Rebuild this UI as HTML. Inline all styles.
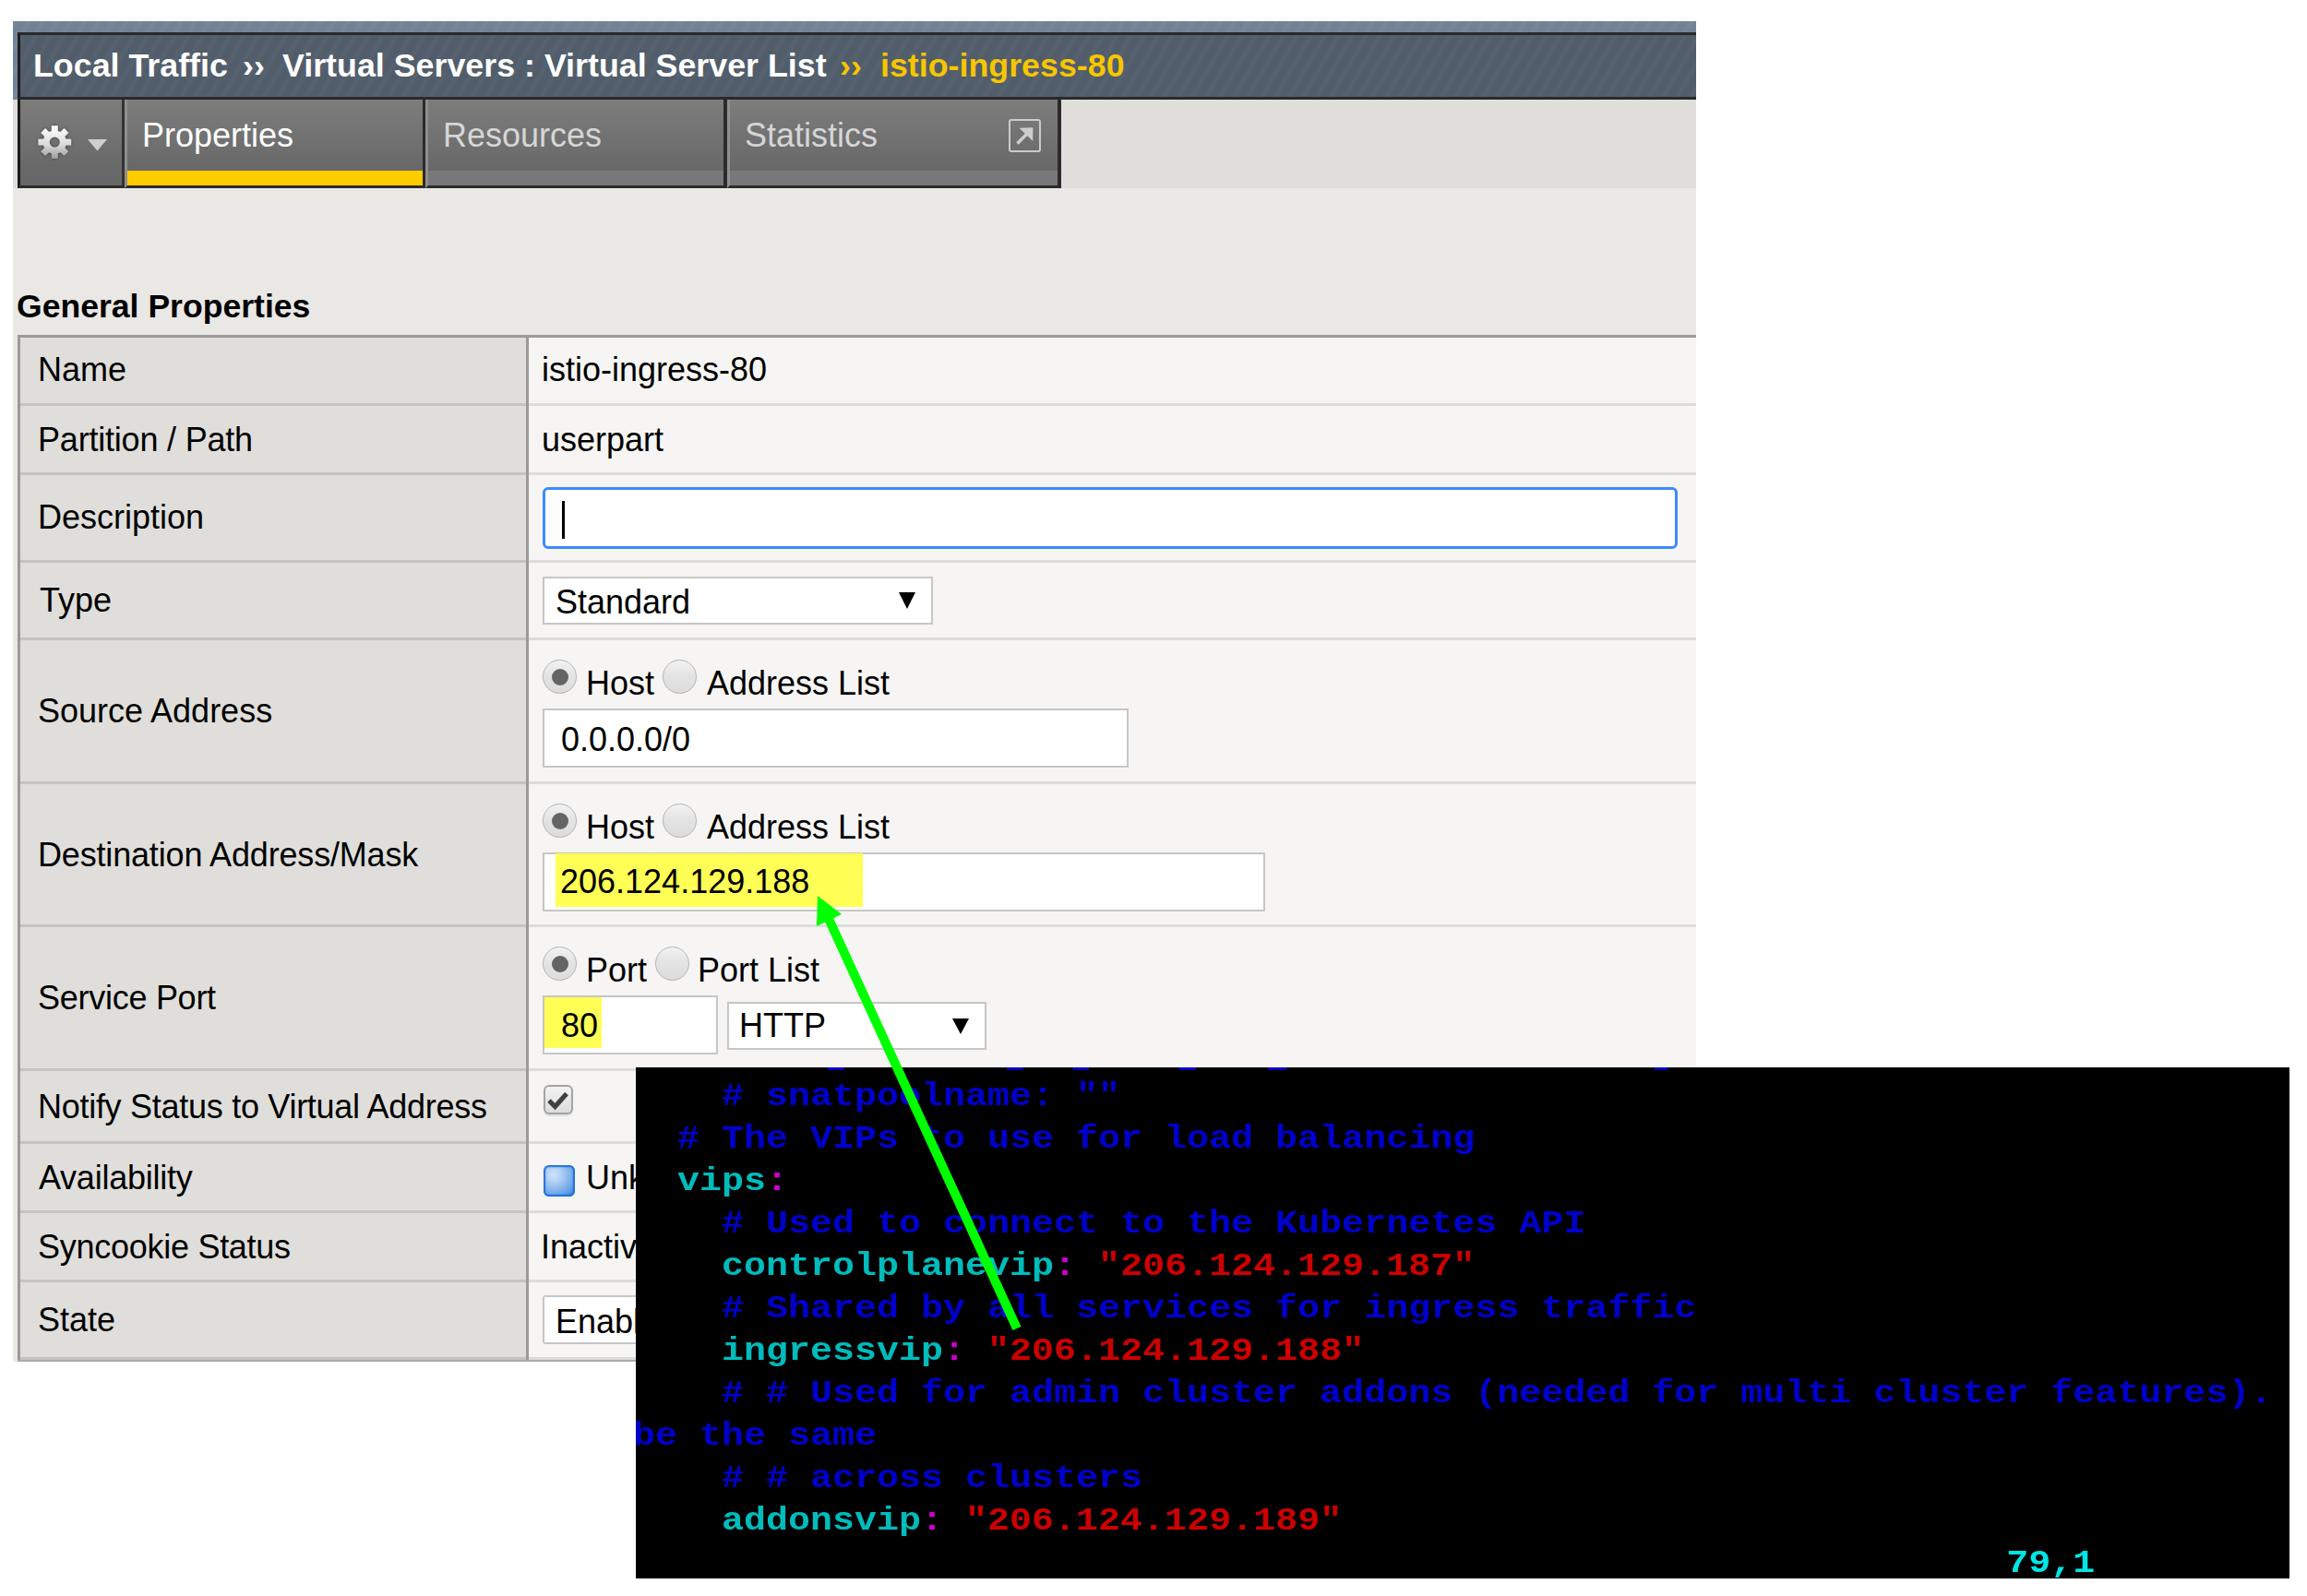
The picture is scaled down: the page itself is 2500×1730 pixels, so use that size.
<!DOCTYPE html>
<html><head><meta charset="utf-8">
<style>
html,body{margin:0;padding:0;background:#fff;width:2500px;height:1730px;overflow:hidden;position:relative}
body{font-family:"Liberation Sans",sans-serif}
.a{position:absolute}
.t{position:absolute;white-space:pre;font-size:36px;line-height:36px;color:#000}
.hdr{left:14px;top:23px;width:1824px;height:85px;background:#728395 repeating-linear-gradient(120deg,rgba(255,255,255,0.03) 0 5px,rgba(0,0,0,0) 5px 13px)}
.hdrin{left:19px;top:35px;width:1816px;height:67px;border-top:3px solid #2a2a2a;border-bottom:3px solid #2a2a2a;border-left:3px solid #1e1e1e;box-sizing:content-box;
 background:#515d6a repeating-linear-gradient(120deg,rgba(255,255,255,0.025) 0 5px,rgba(0,0,0,0) 5px 13px)}
.tabrow{left:14px;top:108px;width:1824px;height:96px;background:#dfdeda}
.body{left:14px;top:204px;width:1824px;height:1272px;background:#e9e8e4}
.tab{position:absolute;top:108px;height:96px;box-sizing:border-box;border-bottom:3px solid #2b2b2b;background:linear-gradient(#7d7d7d,#696969 78%,#666 100%)}
.lbl{left:22px;width:548px;background:#dfdeda}
.val{left:573px;width:1265px;background:#f6f5f3}
.rdl{position:absolute;left:22px;width:548px;height:3px;background:#c4c3bf}
.rdv{position:absolute;left:573px;width:1265px;height:3px;background:#dcdcdb}
.inp{position:absolute;background:#fff;border:2px solid #c6c6c6;box-sizing:border-box}
.radio{position:absolute;width:37px;height:37px;border-radius:50%;box-sizing:border-box;border:1.5px solid #b3b3b3;background:linear-gradient(#f2f2f2,#e4e4e4 45%,#dcdcdc)}
.radio.on::after{content:"";position:absolute;left:8.5px;top:8.5px;width:18px;height:18px;border-radius:50%;background:#646464}
.term{left:689px;top:1157px;width:1792px;height:554px;background:#000;overflow:hidden}
.term pre{position:absolute;left:-3px;top:-37.5px;margin:0;font-family:"Liberation Mono",monospace;font-weight:bold;font-size:35px;letter-spacing:0;line-height:46px;color:#0000cd;transform:scaleX(1.142857);transform-origin:0 0}
.c{color:#00bcbc}.m{color:#cd00cd}.r{color:#cd0000}.b{color:#0000cd}.s{color:#00e5e5}
</style></head><body>
<!-- panel backgrounds -->
<div class="a hdr"></div>
<div class="a hdrin"></div>
<div class="a tabrow"></div>
<div class="a body"></div>

<!-- breadcrumb -->
<div class="t" style="left:36px;top:53px;font-weight:bold;font-size:35.8px;color:#fff">Local Traffic</div>
<div class="t" style="left:263px;top:53px;font-weight:bold;font-size:35.8px;color:#fff">››</div>
<div class="t" style="left:306px;top:53px;font-weight:bold;font-size:35.8px;color:#fff">Virtual Servers : Virtual Server List</div>
<div class="t" style="left:910px;top:53px;font-weight:bold;font-size:35.8px;color:#f7c600">››</div>
<div class="t" style="left:954px;top:53px;font-weight:bold;font-size:35.8px;color:#f7c600">istio-ingress-80</div>

<!-- tabs -->
<div class="tab" style="left:19px;width:116px;box-sizing:border-box;border-left:3px solid #1a1a1a;border-right:3px solid #333"></div>
<div class="tab" style="left:135px;width:323px;border-left:3px solid #8f8f8f;border-right:3px solid #2b2b2b;box-sizing:border-box;width:326px"></div>
<div class="a" style="left:138px;top:185px;width:320px;height:16px;background:#ffcc00"></div>
<div class="tab" style="left:461px;width:327px;border-left:3px solid #8f8f8f;border-right:4px solid #2b2b2b;box-sizing:border-box"></div>
<div class="a" style="left:464px;top:185px;width:320px;height:16px;background:#787878"></div>
<div class="tab" style="left:788px;width:362px;border-left:3px solid #8f8f8f;border-right:4px solid #2b2b2b;box-sizing:border-box"></div>
<div class="a" style="left:791px;top:185px;width:355px;height:16px;background:#787878"></div>

<div class="t" style="left:154px;top:129px;color:#fff">Properties</div>
<div class="t" style="left:480px;top:129px;color:#d6d6d6">Resources</div>
<div class="t" style="left:807px;top:129px;color:#d6d6d6">Statistics</div>
<!-- gear -->
<svg class="a" style="left:35px;top:130px" width="50" height="50" viewBox="0 0 50 50">
 <defs><linearGradient id="gg" gradientUnits="userSpaceOnUse" x1="0" y1="7" x2="0" y2="42"><stop offset="0" stop-color="#ffffff"/><stop offset="0.55" stop-color="#dcdcdc"/><stop offset="1" stop-color="#9c9c9c"/></linearGradient>
 <filter id="gs" x="-30%" y="-30%" width="160%" height="160%"><feGaussianBlur in="SourceAlpha" stdDeviation="1.6"/><feComponentTransfer><feFuncA type="linear" slope="0.55"/></feComponentTransfer><feMerge><feMergeNode/><feMergeNode in="SourceGraphic"/></feMerge></filter>
 <mask id="gm"><rect width="50" height="50" fill="#fff"/><circle cx="24.3" cy="24.1" r="5.6" fill="#000"/></mask></defs>
 <g filter="url(#gs)"><path mask="url(#gm)" fill="url(#gg)" fill-rule="nonzero" d="M20.90,16.10 L20.90,6.30 L27.70,6.30 L27.70,16.10 Z M27.55,16.04 L34.48,9.11 L39.29,13.92 L32.36,20.85 Z M32.30,20.70 L42.10,20.70 L42.10,27.50 L32.30,27.50 Z M32.36,27.35 L39.29,34.28 L34.48,39.09 L27.55,32.16 Z M27.70,32.10 L27.70,41.90 L20.90,41.90 L20.90,32.10 Z M21.05,32.16 L14.12,39.09 L9.31,34.28 L16.24,27.35 Z M16.30,27.50 L6.50,27.50 L6.50,20.70 L16.30,20.70 Z M16.24,20.85 L9.31,13.92 L14.12,9.11 L21.05,16.04 Z M24.30,11.50 A12.60,12.60 0 1,1 24.30,36.70 A12.60,12.60 0 1,1 24.30,11.50 Z"/></g>
</svg>
<svg class="a" style="left:94px;top:150px" width="24" height="15" viewBox="0 0 24 15"><path d="M1,1 L22,1 L11.5,13.5 Z" fill="#cfcfcf"/></svg>
<!-- stats icon -->
<div class="a" style="left:1093px;top:129px;width:35px;height:36px;box-sizing:border-box;border:2.4px solid #cccccc;border-radius:3px"></div>
<svg class="a" style="left:1093px;top:130px" width="36" height="36" viewBox="0 0 36 36"><path d="M9.5,25.5 L19.5,15.5" stroke="#cdcdcd" stroke-width="3.6" fill="none"/><path d="M11.5,8.8 L26.4,8.3 L26.2,23 Z" fill="#cdcdcd"/></svg>

<!-- General Properties -->
<div class="t" style="left:18px;top:314px;font-weight:bold;font-size:35.6px">General Properties</div>

<!-- table -->
<div class="a" style="left:19px;top:363px;width:1819px;height:3px;background:#9a9a9a"></div>
<div class="a" style="left:19px;top:366px;width:3px;height:1110px;background:#9a9a9a"></div>
<div class="a lbl" style="top:366px;height:1105px"></div>
<div class="a" style="left:570px;top:366px;width:3px;height:1108px;background:#9a9a9a"></div>
<div class="a val" style="top:366px;height:1105px"></div>
<div class="rdl" style="top:437px"></div><div class="rdv" style="top:437px"></div>
<div class="rdl" style="top:512px"></div><div class="rdv" style="top:512px"></div>
<div class="rdl" style="top:607px"></div><div class="rdv" style="top:607px"></div>
<div class="rdl" style="top:691px"></div><div class="rdv" style="top:691px"></div>
<div class="rdl" style="top:847px"></div><div class="rdv" style="top:847px"></div>
<div class="rdl" style="top:1002px"></div><div class="rdv" style="top:1002px"></div>
<div class="rdl" style="top:1158px"></div><div class="rdv" style="top:1158px"></div>
<div class="rdl" style="top:1237px"></div><div class="rdv" style="top:1237px"></div>
<div class="rdl" style="top:1312px"></div><div class="rdv" style="top:1312px"></div>
<div class="rdl" style="top:1387px"></div><div class="rdv" style="top:1387px"></div>
<div class="rdl" style="top:1471px"></div><div class="rdv" style="top:1471px"></div>
<div class="a" style="left:19px;top:1474px;width:1819px;height:2px;background:#a9a9a9"></div>

<!-- labels -->
<div class="t" style="left:41px;top:383px">Name</div>
<div class="t" style="left:41px;top:458.5px;letter-spacing:-0.2px">Partition / Path</div>
<div class="t" style="left:41px;top:542.5px">Description</div>
<div class="t" style="left:43px;top:632.5px">Type</div>
<div class="t" style="left:41px;top:753px">Source Address</div>
<div class="t" style="left:41px;top:909px;letter-spacing:-0.17px">Destination Address/Mask</div>
<div class="t" style="left:41px;top:1064px;letter-spacing:-0.27px">Service Port</div>
<div class="t" style="left:41px;top:1182px;letter-spacing:-0.28px">Notify Status to Virtual Address</div>
<div class="t" style="left:42px;top:1258.5px;letter-spacing:-0.25px">Availability</div>
<div class="t" style="left:41px;top:1333.5px;letter-spacing:-0.27px">Syncookie Status</div>
<div class="t" style="left:41px;top:1413px">State</div>

<!-- values -->
<div class="t" style="left:587px;top:383px">istio-ingress-80</div>
<div class="t" style="left:587px;top:458.5px">userpart</div>
<div class="a" style="left:588px;top:528px;width:1230px;height:67px;box-sizing:border-box;border:3px solid #3d8afd;border-radius:6px;background:#fff"></div>
<div class="a" style="left:609px;top:543px;width:3px;height:41px;background:#000"></div>

<div class="inp" style="left:588px;top:625px;width:423px;height:52px"></div>
<div class="t" style="left:602px;top:634.5px">Standard</div>
<svg class="a" style="left:973px;top:641px" width="20" height="20" viewBox="0 0 20 20"><path d="M1,1 L19,1 L10,19 Z" fill="#000"/></svg>

<div class="radio on" style="left:588px;top:715px"></div>
<div class="t" style="left:635px;top:723px">Host</div>
<div class="radio" style="left:718px;top:715px"></div>
<div class="t" style="left:766px;top:723px">Address List</div>
<div class="inp" style="left:588px;top:768px;width:635px;height:64px"></div>
<div class="t" style="left:608px;top:783.5px">0.0.0.0/0</div>

<div class="radio on" style="left:588px;top:871px"></div>
<div class="t" style="left:635px;top:879px">Host</div>
<div class="radio" style="left:718px;top:871px"></div>
<div class="t" style="left:766px;top:879px">Address List</div>
<div class="inp" style="left:588px;top:924px;width:783px;height:64px"></div>
<div class="a" style="left:602px;top:925px;width:333px;height:58px;background:#ffff55"></div>
<div class="t" style="left:607px;top:938px">206.124.129.188</div>

<div class="radio on" style="left:588px;top:1026px"></div>
<div class="t" style="left:635px;top:1034px">Port</div>
<div class="radio" style="left:710px;top:1026px"></div>
<div class="t" style="left:756px;top:1034px">Port List</div>
<div class="inp" style="left:588px;top:1079px;width:190px;height:64px"></div>
<div class="a" style="left:590px;top:1081px;width:62px;height:55px;background:#ffff55"></div>
<div class="t" style="left:608px;top:1094px">80</div>
<div class="inp" style="left:788px;top:1086px;width:281px;height:52px"></div>
<div class="t" style="left:801px;top:1094px">HTTP</div>
<svg class="a" style="left:1031px;top:1103px" width="20" height="20" viewBox="0 0 20 20"><path d="M1,1 L19,1 L10,18 Z" fill="#000"/></svg>

<div class="a" style="left:589px;top:1176px;width:32px;height:32px;box-sizing:border-box;border:2.5px solid #a3a3a3;border-radius:6px;background:linear-gradient(#f2f2f2,#dcdcdc);box-shadow:0 2px 1px rgba(0,0,0,0.08)"></div>
<svg class="a" style="left:589px;top:1176px" width="32" height="32" viewBox="0 0 32 32"><path d="M6,17 L12.5,23.5 L25,9.5" stroke="#404040" stroke-width="5" fill="none" stroke-linejoin="miter"/></svg>

<div class="a" style="left:589px;top:1263px;width:34px;height:34px;border-radius:6px;background:radial-gradient(circle at 32% 30%,#d2e4f8 0,#a9cbf2 30%,#5d9de6 75%,#2a78dc 100%);box-shadow:inset 0 0 1.5px 2px #1b6cd9"></div>
<div class="t" style="left:635px;top:1258.5px">Unknown</div>
<div class="t" style="left:586px;top:1333.5px">Inactive</div>
<div class="inp" style="left:588px;top:1404px;width:300px;height:53px;border-radius:3px"></div>
<div class="t" style="left:602px;top:1414.5px">Enabled</div>

<!-- terminal -->
<div class="a term"><pre><span class="b"> </span>
<span class="b">    # snatpoolname: ""</span>
<span class="b">  # The VIPs to use for load balancing</span>
<span class="c">  vips</span><span class="m">:</span>
<span class="b">    # Used to connect to the Kubernetes API</span>
<span class="c">    controlplanevip</span><span class="m">:</span> <span class="r">"206.124.129.187"</span>
<span class="b">    # Shared by all services for ingress traffic</span>
<span class="c">    ingressvip</span><span class="m">:</span> <span class="r">"206.124.129.188"</span>
<span class="b">    # # Used for admin cluster addons (needed for multi cluster features). Must</span>
<span class="b">be the same</span>
<span class="b">    # # across clusters</span>
<span class="c">    addonsvip</span><span class="m">:</span> <span class="r">"206.124.129.189"</span>
<span class="s">                                                              79,1</span></pre><div class="a" style="left:208px;top:0;width:18px;height:3px;background:#0000c0"></div><div class="a" style="left:402px;top:0;width:18px;height:3px;background:#0000c0"></div><div class="a" style="left:474px;top:0;width:17px;height:3px;background:#0000c0"></div><div class="a" style="left:589px;top:0;width:18px;height:3px;background:#0000c0"></div><div class="a" style="left:685px;top:0;width:20px;height:3px;background:#0000c0"></div><div class="a" style="left:1104px;top:0;width:14px;height:3px;background:#0000c0"></div></div>

<!-- green arrow -->
<svg class="a" style="left:0;top:0" width="2500" height="1730" viewBox="0 0 2500 1730">
 <line x1="1102" y1="1440" x2="898" y2="996" stroke="#00ff00" stroke-width="10"/>
 <path d="M886,971 L885,1004 L912,991 Z" fill="#00ff00"/>
</svg>
</body></html>
